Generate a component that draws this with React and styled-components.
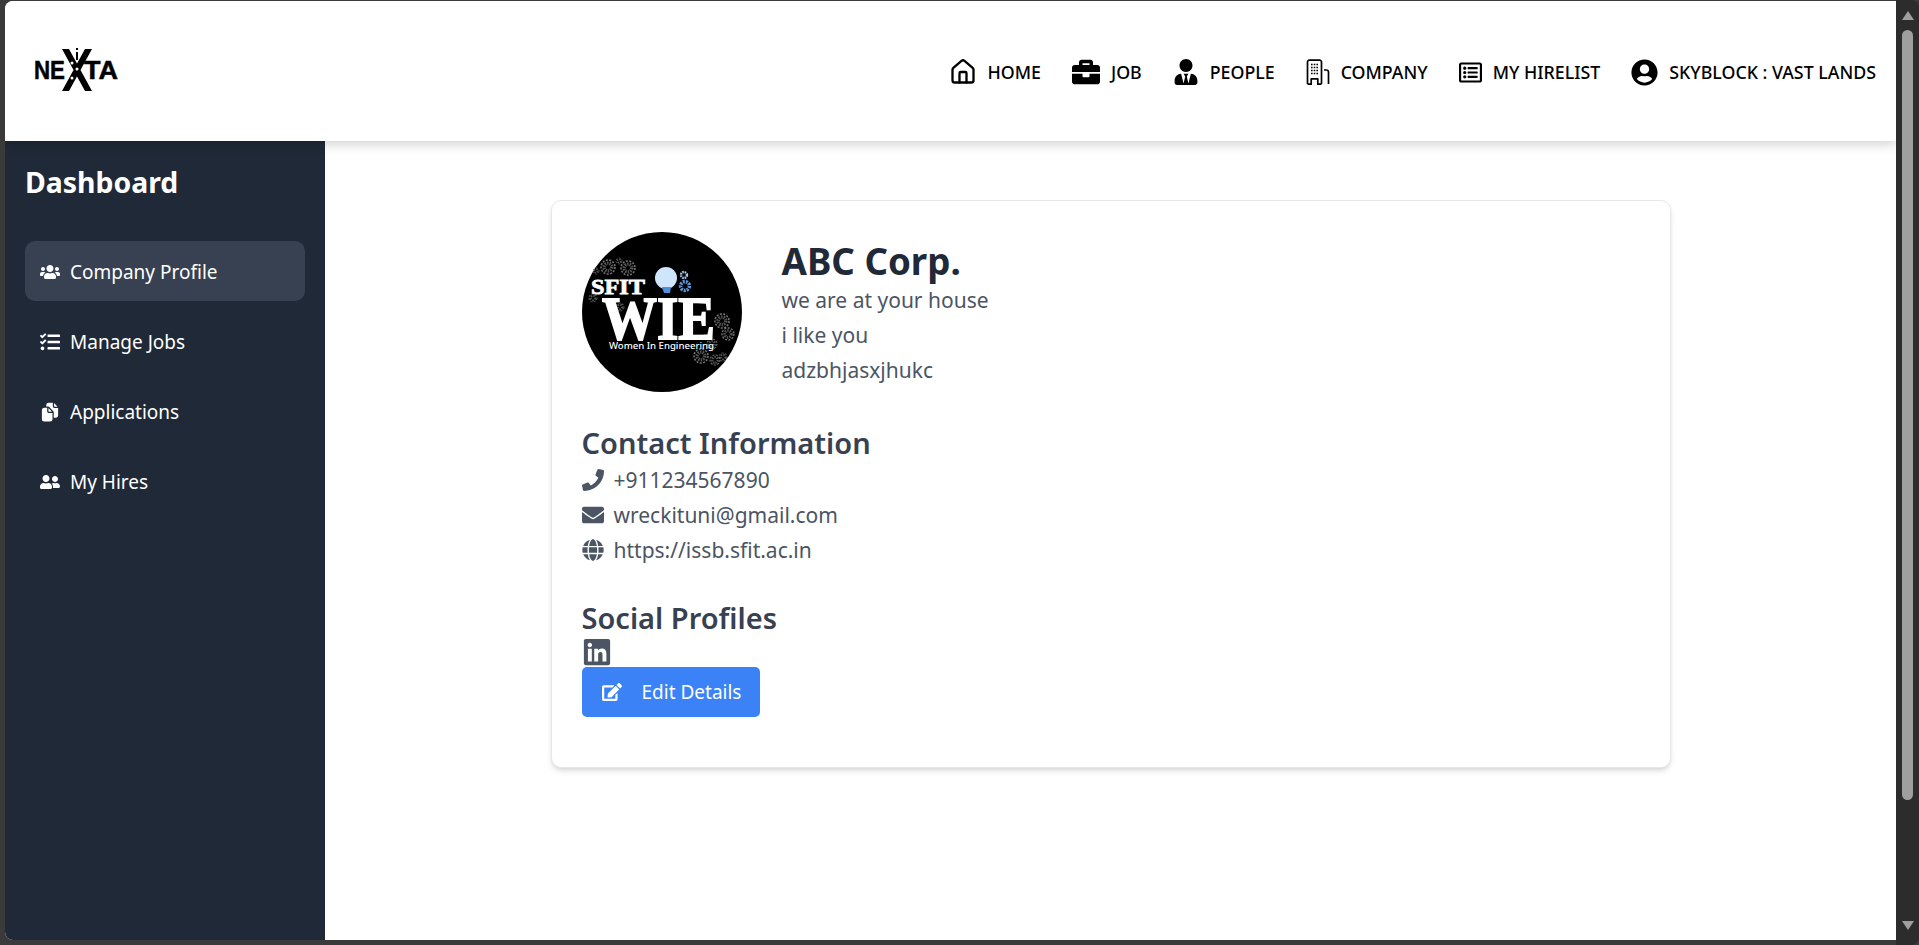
import React from 'react'
import styled, { createGlobalStyle } from 'styled-components'
import { House } from 'lucide-react'
import {
  FaBriefcase,
  FaEdit,
  FaEnvelope,
  FaGlobe,
  FaLinkedin,
  FaPhone,
  FaRegListAlt,
  FaTasks,
  FaUserCircle,
  FaUserFriends,
  FaUsers,
  FaUserTie,
} from 'react-icons/fa'
import { IoDocuments } from 'react-icons/io5'

const GlobalStyle = createGlobalStyle`
  html, body {
    margin: 0;
    height: 100%;
    overflow: hidden;
    background: #3a3a3a;
  }
  #root {
    height: 100%;
  }
`

const Frame = styled.div`
  display: flex;
  height: 945px;
  box-sizing: border-box;
  padding: 1px 0 5px 5px;
  background: #3a3a3a;
  font-family: "Noto Sans", "Open Sans", sans-serif;
`

const Viewport = styled.div`
  flex: 1;
  min-width: 0;
  display: flex;
  flex-direction: column;
  background: #fff;
  border-radius: 8px 0 0 8px;
  overflow: hidden;
`

const Header = styled.header`
  position: relative;
  z-index: 2;
  flex: 0 0 140px;
  display: flex;
  align-items: center;
  justify-content: space-between;
  padding: 0 20px 0 28px;
  background: #fff;
  box-shadow: 0 4px 10px rgba(0, 0, 0, 0.16);
`

const Nav = styled.nav`
  display: flex;
  align-items: center;
  gap: 31px;
  margin-top: 2px;
`

const NavItem = styled.a`
  display: flex;
  align-items: center;
  gap: 11px;
  color: #000;
  font-size: 17.8px;
  font-weight: 500;
  white-space: nowrap;
  svg {
    display: block;
    flex: none;
  }
`

const Body = styled.div`
  flex: 1;
  min-height: 0;
  display: flex;
`

const Sidebar = styled.aside`
  flex: 0 0 320px;
  box-sizing: border-box;
  padding: 20px 20px 0 20px;
  background: #1f2937;
  color: #fff;
`

const SideTitle = styled.h1`
  margin: 0 0 38px;
  font-size: 28.4px;
  line-height: 42px;
  font-weight: 700;
`

const SideList = styled.div`
  display: flex;
  flex-direction: column;
  gap: 10px;
`

const SideItem = styled.a`
  display: flex;
  align-items: center;
  gap: 10px;
  box-sizing: border-box;
  height: 60px;
  padding: 2px 0 0 15px;
  border-radius: 10px;
  background: ${p => (p.$active ? '#374151' : 'transparent')};
  font-size: 19px;
  svg {
    flex: none;
    width: 20px;
    font-size: 20px;
  }
`

const Main = styled.main`
  flex: 1;
  min-width: 0;
  display: flex;
  justify-content: center;
  align-items: flex-start;
  padding-top: 59px;
`

const Card = styled.section`
  width: 1120px;
  height: 568px;
  box-sizing: border-box;
  padding: 31px 30px;
  background: #fff;
  border: 1px solid #e5e7eb;
  border-radius: 10px;
  box-shadow: 0 4px 6px -1px rgba(0, 0, 0, 0.12), 0 2px 4px -2px rgba(0, 0, 0, 0.1);
`

const Profile = styled.div`
  display: flex;
  gap: 40px;
  margin-bottom: 33px;
`

const Avatar = styled.svg`
  display: block;
  flex: none;
  width: 160px;
  height: 160px;
`

const CompanyName = styled.h2`
  margin: 7px 0 0;
  font-size: 36.7px;
  line-height: 44px;
  font-weight: 700;
  color: #1f2937;
`

const Tagline = styled.p`
  margin: 0;
  font-size: 21px;
  line-height: 35px;
  color: #4b5563;
`

const SectionTitle = styled.h3`
  margin: 0 0 1px;
  font-size: 29px;
  line-height: 36px;
  font-weight: 600;
  color: #374151;
`

const ContactList = styled.div`
  display: flex;
  flex-direction: column;
  margin-bottom: 33px;
`

const ContactRow = styled.div`
  display: flex;
  align-items: center;
  gap: 10px;
  height: 35px;
  font-size: 21px;
  color: #4b5563;
  svg {
    flex: none;
    font-size: 22px;
  }
`

const LinkedinLink = styled.a`
  display: flex;
  height: 30px;
  align-items: center;
  color: #4b5563;
  font-size: 30px;
`

const EditButton = styled.button`
  display: flex;
  align-items: center;
  gap: 20px;
  width: 178px;
  height: 50px;
  padding: 0 0 0 20px;
  border: 0;
  border-radius: 5px;
  background: #3b82f6;
  color: #fff;
  font-family: inherit;
  font-size: 19px;
  svg {
    flex: none;
    font-size: 20px;
  }
`

const Scrollbar = styled.div`
  flex: 0 0 23px;
  margin: -1px 0 -5px;
  display: flex;
  flex-direction: column;
  align-items: center;
  background: #2c2c2c;
  border-radius: 0 8px 8px 0;
`

const ArrowUp = styled.div`
  margin-top: 11px;
  border-left: 6px solid transparent;
  border-right: 6px solid transparent;
  border-bottom: 9px solid #9f9f9f;
`

const Thumb = styled.div`
  width: 11px;
  height: 770px;
  margin-top: 10px;
  border-radius: 6px;
  background: #9f9f9f;
`

const ArrowDown = styled.div`
  margin-top: auto;
  margin-bottom: 15px;
  border-left: 6px solid transparent;
  border-right: 6px solid transparent;
  border-top: 9px solid #9f9f9f;
`

const NextaLogo = () => (
  <svg width="90" height="46" viewBox="0 0 90 46" aria-label="NEXTA logo">
    <text x="1" y="31" fontFamily="Liberation Sans" fontWeight="700" fontSize="25" stroke="#000" strokeWidth="0.5" textLength="31" lengthAdjust="spacingAndGlyphs">NE</text>
    <text x="51" y="31" fontFamily="Liberation Sans" fontWeight="700" fontSize="25" stroke="#000" strokeWidth="0.5" textLength="34" lengthAdjust="spacingAndGlyphs">TA</text>
    <path d="M29 1h7l23 42h-7zM52 1h7L36 43h-7z" fill="#000" />
    <rect x="43" y="0" width="2" height="2" fill="#000" />
    <rect x="43" y="4" width="2" height="8" fill="#000" />
    <circle cx="39" cy="15" r="1.5" fill="#fff" />
    <circle cx="44" cy="21" r="1.5" fill="#fff" />
    <circle cx="39" cy="30" r="1.5" fill="#fff" />
  </svg>
)

const CompanyIcon = () => (
  <svg width="24" height="27" viewBox="0 0 24 27" fill="none" stroke="#000" strokeWidth="1.7" strokeLinejoin="round">
    <path d="M1.5 25V3a1.8 1.8 0 0 1 1.8-1.8h10.4A1.8 1.8 0 0 1 15.5 3v22" />
    <path d="M1.5 25.2h3.7v-5.4h6.6v5.4h3.7" />
    <path d="M18 11h2.2c1.3 0 2.3 1 2.3 2.3V25" />
    <path d="M5 5.5h7M5 8.5h7M5 11.5h7M5 14.5h7" strokeWidth="1.6" strokeDasharray="1.6 1.1" />
  </svg>
)

const Gear = ({ x, y, r }) => (
  <g fill="none" stroke="#777">
    <circle cx={x} cy={y} r={r} strokeWidth={r * 0.22} strokeDasharray="2 1.4" />
    <circle cx={x} cy={y} r={r * 0.55} strokeWidth={r * 0.5} stroke="#555" strokeDasharray="1.4 1" />
  </g>
)

const WieLogo = () => (
  <Avatar viewBox="0 0 160 160" aria-label="SFIT WIE logo">
    <circle cx="80" cy="80" r="80" fill="#000" />
    <Gear x={26} y={35} r={7} />
    <Gear x={46} y={36} r={7} />
    <Gear x={37} y={29} r={3} />
    <Gear x={14} y={39} r={3} />
    <Gear x={11} y={66} r={4} />
    <Gear x={38} y={75} r={4} />
    <Gear x={140} y={89} r={7} />
    <Gear x={146} y={102} r={6} />
    <Gear x={119} y={124} r={7} />
    <Gear x={133} y={128} r={5} />
    <Gear x={141} y={125} r={4} />
    <Gear x={130} y={112} r={5} />
    <circle cx="84" cy="46" r="11" fill="#cfe5fb" />
    <path d="M80 55h9l-1 6h-6z" fill="#4f8fdc" />
    <circle cx="102" cy="43" r="3" fill="none" stroke="#a9c8ea" strokeWidth="2.4" strokeDasharray="1.6 0.8" />
    <circle cx="103" cy="54" r="4.4" fill="none" stroke="#5b95d8" strokeWidth="3.6" strokeDasharray="2 1" />
    <text x="9" y="62" fill="#fff" fontFamily="Liberation Serif" fontWeight="700" fontSize="22" textLength="54" lengthAdjust="spacingAndGlyphs" stroke="#fff" strokeWidth="0.8">SFIT</text>
    <text x="20" y="107" fill="#fff" fontFamily="Liberation Serif" fontWeight="700" fontSize="62" textLength="113" lengthAdjust="spacingAndGlyphs" stroke="#fff" strokeWidth="1.8">WIE</text>
    <text x="27" y="117" fill="#fff" fontFamily="Noto Sans" fontWeight="500" fontSize="9.5" textLength="105" lengthAdjust="spacingAndGlyphs">Women In Engineering</text>
  </Avatar>
)

const navItems = [
  { label: 'HOME', icon: <House size={28} strokeWidth={2} /> },
  { label: 'JOB', icon: <FaBriefcase size={28} /> },
  { label: 'PEOPLE', icon: <FaUserTie size={26} /> },
  { label: 'COMPANY', icon: <CompanyIcon /> },
  { label: 'MY HIRELIST', icon: <FaRegListAlt size={23} /> },
  { label: 'SKYBLOCK : VAST LANDS', icon: <FaUserCircle size={27} /> },
]

const sideItems = [
  { label: 'Company Profile', icon: <FaUsers />, active: true },
  { label: 'Manage Jobs', icon: <FaTasks /> },
  { label: 'Applications', icon: <IoDocuments /> },
  { label: 'My Hires', icon: <FaUserFriends /> },
]

const contacts = [
  { text: '+911234567890', icon: <FaPhone /> },
  { text: 'wreckituni@gmail.com', icon: <FaEnvelope /> },
  { text: 'https://issb.sfit.ac.in', icon: <FaGlobe /> },
]

const App = () => (
  <>
    <GlobalStyle />
    <Frame>
      <Viewport>
        <Header>
          <NextaLogo />
          <Nav>
            {navItems.map(item => (
              <NavItem key={item.label}>
                {item.icon}
                {item.label}
              </NavItem>
            ))}
          </Nav>
        </Header>
        <Body>
          <Sidebar>
            <SideTitle>Dashboard</SideTitle>
            <SideList>
              {sideItems.map(item => (
                <SideItem key={item.label} $active={item.active}>
                  {item.icon}
                  {item.label}
                </SideItem>
              ))}
            </SideList>
          </Sidebar>
          <Main>
            <Card>
              <Profile>
                <WieLogo />
                <div>
                  <CompanyName>ABC Corp.</CompanyName>
                  <Tagline>we are at your house</Tagline>
                  <Tagline>i like you</Tagline>
                  <Tagline>adzbhjasxjhukc</Tagline>
                </div>
              </Profile>
              <SectionTitle>Contact Information</SectionTitle>
              <ContactList>
                {contacts.map(c => (
                  <ContactRow key={c.text}>
                    {c.icon}
                    {c.text}
                  </ContactRow>
                ))}
              </ContactList>
              <SectionTitle>Social Profiles</SectionTitle>
              <LinkedinLink><FaLinkedin /></LinkedinLink>
              <EditButton><FaEdit />Edit Details</EditButton>
            </Card>
          </Main>
        </Body>
      </Viewport>
      <Scrollbar>
        <ArrowUp />
        <Thumb />
        <ArrowDown />
      </Scrollbar>
    </Frame>
  </>
)

export default App
